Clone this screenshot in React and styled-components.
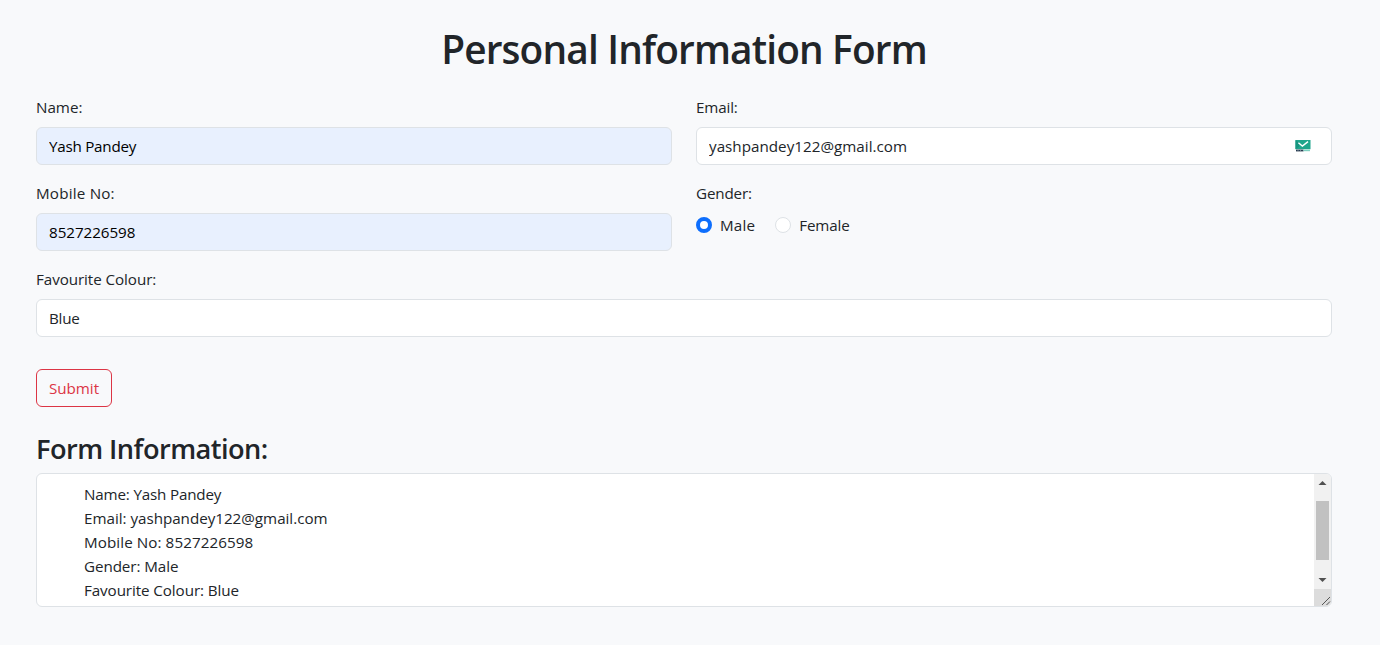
import React from "react";
import styled, { createGlobalStyle } from "styled-components";

const GlobalStyle = createGlobalStyle`
  *, *::before, *::after { box-sizing: border-box; }
  body {
    margin: 0;
    min-height: 100vh;
    background: #f8f9fb;
    color: #212529;
    font-family: "Segoe UI", "Open Sans", "Noto Sans", sans-serif;
    font-size: 15.2px;
    line-height: 24px;
  }
`;

const Page = styled.main`
  padding: 25px 48px 38px 36px;
`;

const Title = styled.h1`
  margin: 0 0 22px;
  text-align: center;
  font-size: 38.8px;
  font-weight: 600;
  line-height: 48px;
  letter-spacing: -0.84px;
`;

const Grid = styled.form`
  display: grid;
  grid-template-columns: 1fr 1fr;
  column-gap: 24px;
  row-gap: 16px;
`;

const Field = styled.div`
  display: flex;
  flex-direction: column;
  gap: 8px;
  grid-column: ${(p) => (p.$wide ? "1 / -1" : "auto")};
`;

const Text = styled.span`
  letter-spacing: ${(p) => p.$track || 0}px;
  white-space: pre;
`;

const InputBox = styled.div`
  display: flex;
  align-items: center;
  height: 38px;
  padding: 0 20px 0 12px;
  border: 1px solid #dee2e6;
  border-radius: 6px;
  background: ${(p) => (p.$filled ? "#e8f0fe" : "#fff")};
`;

const Input = styled.input`
  flex: 1;
  min-width: 0;
  height: 24px;
  padding: 0;
  border: 0;
  outline: 0;
  background: transparent;
  color: ${(p) => (p.$filled ? "#000" : "#212529")};
  font: inherit;
  letter-spacing: ${(p) => p.$track || 0}px;
`;

const Radios = styled.div`
  display: flex;
  gap: 20px;
  height: 24px;
`;

const RadioLabel = styled.label`
  display: flex;
  align-items: center;
  gap: 8px;
`;

const Radio = styled.input`
  appearance: none;
  width: 16px;
  height: 16px;
  margin: 0;
  border: 1px solid #dee2e6;
  border-radius: 50%;
  background: #fff;
  &:checked {
    border: 4px solid #0d6efd;
  }
`;

const Submit = styled.button`
  display: block;
  width: 76px;
  height: 38px;
  margin: 32px 0 25px;
  padding: 0;
  border: 1px solid #dc3545;
  border-radius: 6px;
  background: transparent;
  color: #dc3545;
  font: inherit;
`;

const Subtitle = styled.h3`
  margin: 0 0 7px;
  font-size: 27.2px;
  font-weight: 600;
  line-height: 34px;
  letter-spacing: -0.54px;
`;

const Output = styled.div`
  display: flex;
  height: 134px;
  border: 1px solid #dee2e6;
  border-radius: 6px;
  background: #fff;
  overflow: hidden;
`;

const Lines = styled.div`
  flex: 1;
  display: flex;
  flex-direction: column;
  padding: 8px 0 0 47px;
`;

const Scrollbar = styled.div`
  display: flex;
  flex-direction: column;
  width: 17px;
  background: #f1f1f1;
`;

const Thumb = styled.div`
  width: 13px;
  height: 59px;
  margin: 10px 2px 11px;
  background: #c1c1c1;
`;

const Arrow = styled.svg`
  display: block;
  width: 17px;
  height: 17px;
  fill: #505050;
`;

const Resizer = styled.svg`
  display: block;
  width: 17px;
  height: 17px;
  margin-top: auto;
  background: #dcdcdc;
`;

const MailIcon = () => (
  <svg width="16" height="16" viewBox="0 0 16 16">
    <path d="M.5 2h15v9.2H.5z" fill="#1fa58c" />
    <path d="M1 2.6l3 2.2v4L.5 11.2V2z" fill="#179580" />
    <path d="M3.4 4.8l4 3.2L13 3.6" fill="none" stroke="#fff" strokeWidth="1.4" />
    <path d="M1 11.6h7.5v1.8H1z" fill="#263b50" />
    <path d="M2.5 12.5h1M5 12.5h1" stroke="#9aa5af" strokeWidth=".7" />
    <path d="M8.5 11.6H15v1.6H8.5z" fill="#7fd0c1" />
  </svg>
);

const rows = [
  ["Name: Yash Pandey", -0.17],
  ["Email: yashpandey122@gmail.com", -0.02],
  ["Mobile No: 8527226598", 0.08],
  ["Gender: Male", -0.08],
  ["Favourite Colour: Blue", -0.09],
];

function TextField({ label, value, filled, wide, labelTrack, track, icon }) {
  return (
    <Field $wide={wide}>
      <Text as="label" $track={labelTrack}>{label}</Text>
      <InputBox $filled={filled}>
        <Input defaultValue={value} $filled={filled} $track={track} spellCheck={false} />
        {icon}
      </InputBox>
    </Field>
  );
}

export default function App() {
  return (
    <>
      <GlobalStyle />
      <Page>
        <Title>Personal Information Form</Title>
        <Grid>
          <TextField label="Name:" value="Yash Pandey" track={-0.24} filled />
          <TextField label="Email:" value="yashpandey122@gmail.com" labelTrack={-0.15} track={0.02} icon={<MailIcon />} />
          <TextField label="Mobile No:" value="8527226598" labelTrack={0.2} track={-0.05} filled />
          <Field>
            <Text $track={-0.15}>Gender:</Text>
            <Radios>
              <RadioLabel>
                <Radio type="radio" name="gender" defaultChecked />
                <Text $track={0.2}>Male</Text>
              </RadioLabel>
              <RadioLabel>
                <Radio type="radio" name="gender" />
                <Text $track={-0.15}>Female</Text>
              </RadioLabel>
            </Radios>
          </Field>
          <TextField label="Favourite Colour:" value="Blue" labelTrack={-0.07} track={-0.25} wide />
        </Grid>
        <Submit type="button">Submit</Submit>
        <Subtitle>Form Information:</Subtitle>
        <Output>
          <Lines>
            {rows.map(([line, track]) => (
              <Text key={line} $track={track}>{line}</Text>
            ))}
          </Lines>
          <Scrollbar>
            <Arrow viewBox="0 0 17 17"><path d="M8.5 7l4 4h-8z" /></Arrow>
            <Thumb />
            <Arrow viewBox="0 0 17 17"><path d="M4.5 7h8l-4 4z" /></Arrow>
            <Resizer viewBox="0 0 17 17">
              <path d="M8 16l8-8M12.5 16l3.5-3.5" stroke="#555" fill="none" />
            </Resizer>
          </Scrollbar>
        </Output>
      </Page>
    </>
  );
}
